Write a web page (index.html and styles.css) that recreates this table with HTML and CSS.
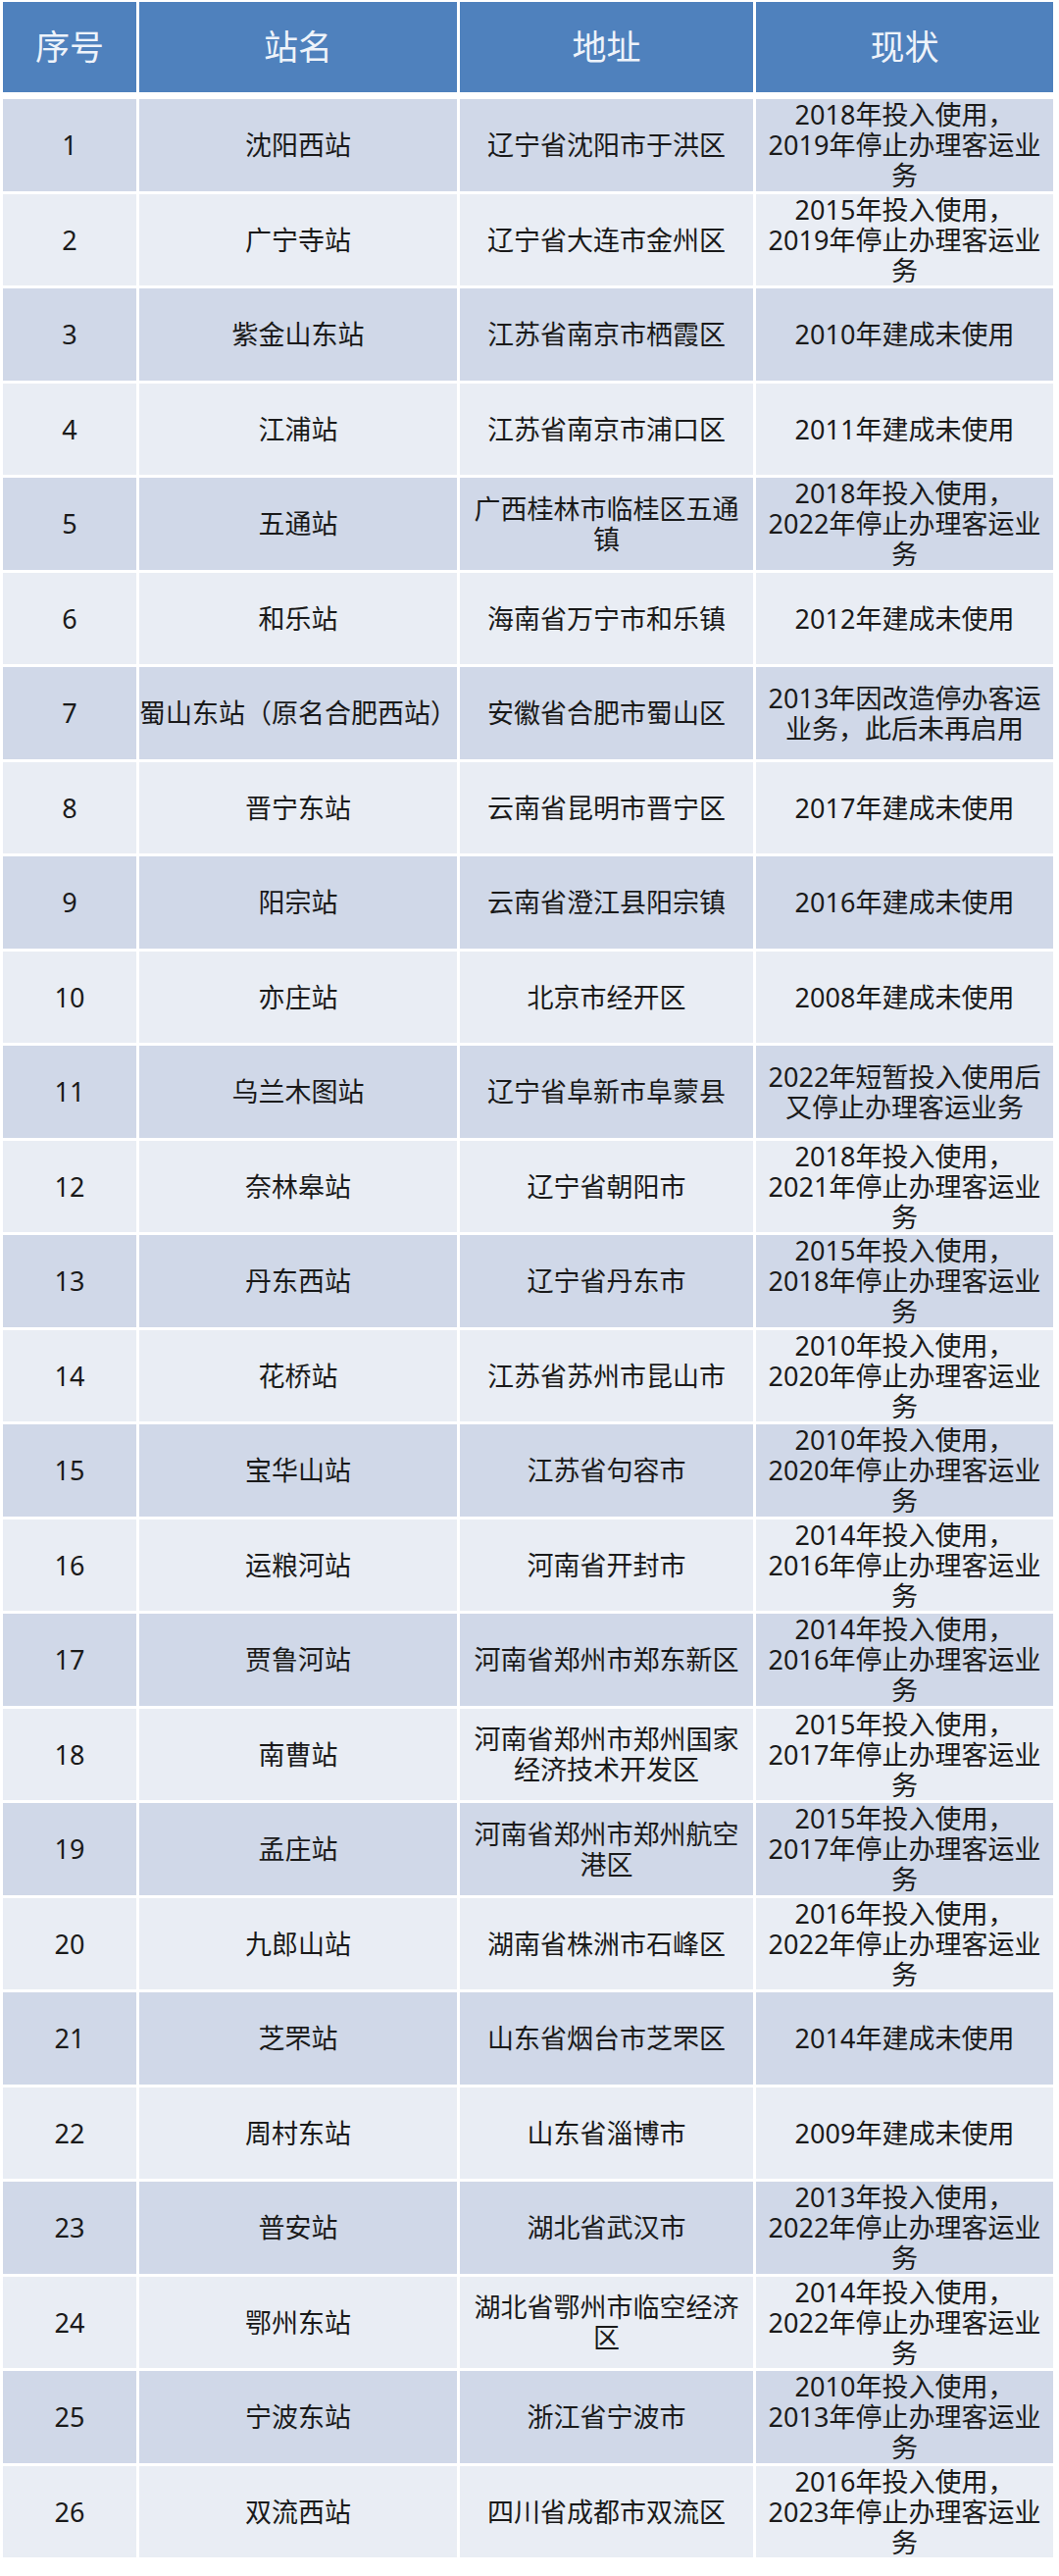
FILE: index.html
```html
<!DOCTYPE html>
<html lang="zh-CN">
<head>
<meta charset="utf-8">
<title>停用车站一览</title>
<link rel="stylesheet" href="styles.css">
</head>
<body>
<table class="stations">
  <thead>
    <tr>
      <th class="c-no">序号</th>
      <th class="c-name">站名</th>
      <th class="c-addr">地址</th>
      <th class="c-status">现状</th>
    </tr>
  </thead>
  <tbody>
    <tr><td>1</td><td class="name">沈阳西站</td><td>辽宁省沈阳市于洪区</td><td>2018年投入使用，<br>2019年停止办理客运业务</td></tr>
    <tr><td>2</td><td class="name">广宁寺站</td><td>辽宁省大连市金州区</td><td>2015年投入使用，<br>2019年停止办理客运业务</td></tr>
    <tr><td>3</td><td class="name">紫金山东站</td><td>江苏省南京市栖霞区</td><td>2010年建成未使用</td></tr>
    <tr><td>4</td><td class="name">江浦站</td><td>江苏省南京市浦口区</td><td>2011年建成未使用</td></tr>
    <tr><td>5</td><td class="name">五通站</td><td>广西桂林市临桂区五通镇</td><td>2018年投入使用，<br>2022年停止办理客运业务</td></tr>
    <tr><td>6</td><td class="name">和乐站</td><td>海南省万宁市和乐镇</td><td>2012年建成未使用</td></tr>
    <tr><td>7</td><td class="name">蜀山东站（原名合肥西站）</td><td>安徽省合肥市蜀山区</td><td>2013年因改造停办客运业务，此后未再启用</td></tr>
    <tr><td>8</td><td class="name">晋宁东站</td><td>云南省昆明市晋宁区</td><td>2017年建成未使用</td></tr>
    <tr><td>9</td><td class="name">阳宗站</td><td>云南省澄江县阳宗镇</td><td>2016年建成未使用</td></tr>
    <tr><td>10</td><td class="name">亦庄站</td><td>北京市经开区</td><td>2008年建成未使用</td></tr>
    <tr><td>11</td><td class="name">乌兰木图站</td><td>辽宁省阜新市阜蒙县</td><td>2022年短暂投入使用后又停止办理客运业务</td></tr>
    <tr><td>12</td><td class="name">奈林皋站</td><td>辽宁省朝阳市</td><td>2018年投入使用，<br>2021年停止办理客运业务</td></tr>
    <tr><td>13</td><td class="name">丹东西站</td><td>辽宁省丹东市</td><td>2015年投入使用，<br>2018年停止办理客运业务</td></tr>
    <tr><td>14</td><td class="name">花桥站</td><td>江苏省苏州市昆山市</td><td>2010年投入使用，<br>2020年停止办理客运业务</td></tr>
    <tr><td>15</td><td class="name">宝华山站</td><td>江苏省句容市</td><td>2010年投入使用，<br>2020年停止办理客运业务</td></tr>
    <tr><td>16</td><td class="name">运粮河站</td><td>河南省开封市</td><td>2014年投入使用，<br>2016年停止办理客运业务</td></tr>
    <tr><td>17</td><td class="name">贾鲁河站</td><td>河南省郑州市郑东新区</td><td>2014年投入使用，<br>2016年停止办理客运业务</td></tr>
    <tr><td>18</td><td class="name">南曹站</td><td>河南省郑州市郑州国家经济技术开发区</td><td>2015年投入使用，<br>2017年停止办理客运业务</td></tr>
    <tr><td>19</td><td class="name">孟庄站</td><td>河南省郑州市郑州航空港区</td><td>2015年投入使用，<br>2017年停止办理客运业务</td></tr>
    <tr><td>20</td><td class="name">九郎山站</td><td>湖南省株洲市石峰区</td><td>2016年投入使用，<br>2022年停止办理客运业务</td></tr>
    <tr><td>21</td><td class="name">芝罘站</td><td>山东省烟台市芝罘区</td><td>2014年建成未使用</td></tr>
    <tr><td>22</td><td class="name">周村东站</td><td>山东省淄博市</td><td>2009年建成未使用</td></tr>
    <tr><td>23</td><td class="name">普安站</td><td>湖北省武汉市</td><td>2013年投入使用，<br>2022年停止办理客运业务</td></tr>
    <tr><td>24</td><td class="name">鄂州东站</td><td>湖北省鄂州市临空经济区</td><td>2014年投入使用，<br>2022年停止办理客运业务</td></tr>
    <tr><td>25</td><td class="name">宁波东站</td><td>浙江省宁波市</td><td>2010年投入使用，<br>2013年停止办理客运业务</td></tr>
    <tr><td>26</td><td class="name">双流西站</td><td>四川省成都市双流区</td><td>2016年投入使用，<br>2023年停止办理客运业务</td></tr>
  </tbody>
</table>
</body>
</html>
```
FILE: styles.css
```css
html, body {
  margin: 0;
  padding: 0;
  background: #ffffff;
}

body {
  font-family: "Noto Sans", "Noto Sans CJK SC", sans-serif;
  color: #1a1a1a;
}

.stations {
  table-layout: fixed;
  width: 1077px;
  border-collapse: separate;
  border-spacing: 3px;
  margin-top: -1px;
}

.stations th,
.stations td {
  box-sizing: border-box;
  text-align: center;
  vertical-align: middle;
  padding: 0 6px;
}

.stations th {
  height: 96px;
  background: #4f81bd;
  background-clip: padding-box;
  border-bottom: 4px solid #ffffff;
  color: #eef3fa;
  font-size: 35px;
  font-weight: normal;
  line-height: 40px;
}

.c-no { width: 136px; }
.c-name { width: 324px; }
.c-addr { width: 299px; }
.c-status { width: 303px; }

.stations td {
  height: 93.5px;
  font-size: 27px;
  line-height: 31px;
  background: #e9edf4;
}

.stations tbody tr:nth-child(odd) td {
  background: #d0d8e8;
}

.stations td.name {
  white-space: nowrap;
  padding: 0;
}
```
